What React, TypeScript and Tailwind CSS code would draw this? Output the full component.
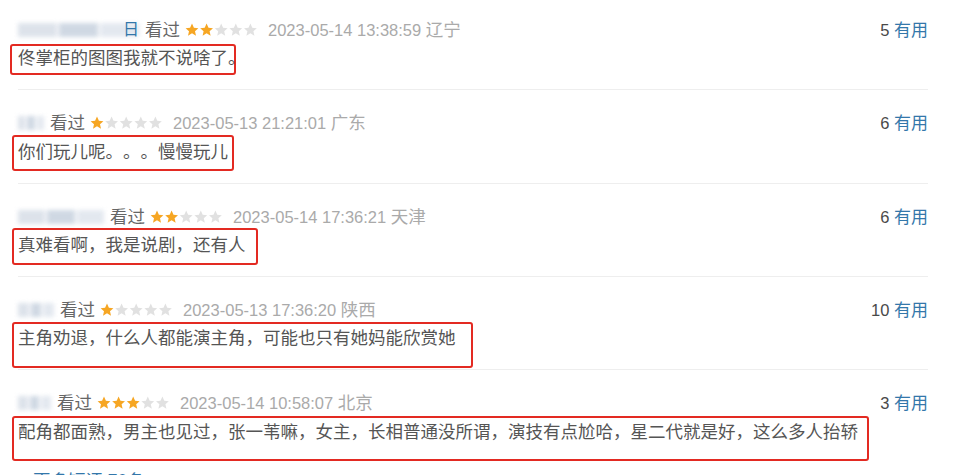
import React from 'react';

type Review = {
  nameW: number;
  nameTail?: string;
  stars: number;
  time: string;
  place: string;
  useful: number;
  text: string;
  headerMt: string;
  boxCls: string;
  dividerCls: string;
};

const reviews: Review[] = [
  {
    nameW: 121,
    nameTail: '日',
    stars: 2,
    time: '2023-05-14 13:38:59',
    place: '辽宁',
    useful: 5,
    text: '佟掌柜的图图我就不说啥了。',
    headerMt: 'mt-[20px]',
    boxCls: 'mt-[4px] -ml-[8px] w-[226px] h-[31px] pl-[6px] pt-[1px]',
    dividerCls: 'mt-[14px]',
  },
  {
    nameW: 26,
    stars: 1,
    time: '2023-05-13 21:21:01',
    place: '广东',
    useful: 6,
    text: '你们玩儿呢。。。慢慢玩儿',
    headerMt: 'mt-[23px]',
    boxCls: 'mt-[2px] -ml-[6px] w-[222px] h-[36px] pl-[4px] pt-[4px]',
    dividerCls: 'mt-[12px]',
  },
  {
    nameW: 86,
    stars: 2,
    time: '2023-05-14 17:36:21',
    place: '天津',
    useful: 6,
    text: '真难看啊，我是说剧，还有人',
    headerMt: 'mt-[23px]',
    boxCls: 'mt-[1px] -ml-[6px] w-[246px] h-[37px] pl-[4px] pt-[4px]',
    dividerCls: 'mt-[11px]',
  },
  {
    nameW: 36,
    stars: 1,
    time: '2023-05-13 17:36:20',
    place: '陕西',
    useful: 10,
    text: '主角劝退，什么人都能演主角，可能也只有她妈能欣赏她',
    headerMt: 'mt-[23px]',
    boxCls: 'mt-[2px] -ml-[6px] w-[461px] h-[46px] pl-[4px] pt-[3px]',
    dividerCls: 'mt-[1px]',
  },
  {
    nameW: 33,
    stars: 3,
    time: '2023-05-14 10:58:07',
    place: '北京',
    useful: 3,
    text: '配角都面熟，男主也见过，张一苇嘛，女主，长相普通没所谓，演技有点尬哈，星二代就是好，这么多人抬轿',
    headerMt: 'mt-[23px]',
    boxCls: 'mt-[3px] -ml-[6px] w-[857px] h-[45px] pl-[4px] pt-[3px]',
    dividerCls: 'hidden',
  },
];

function Stars({ n }: { n: number }) {
  const star = 'M7 0.6 L8.9 4.8 L13.4 5.2 L10 8.2 L11 12.7 L7 10.3 L3 12.7 L4 8.2 L0.6 5.2 L5.1 4.8 Z';
  return (
    <svg width="73" height="14" viewBox="0 0 73 14" className="shrink-0">
      {[0, 1, 2, 3, 4].map((i) => (
        <path key={i} d={star} transform={`translate(${i * 14.6} 0)`} fill={i < n ? '#f6a623' : '#e1e1e1'} />
      ))}
    </svg>
  );
}

function BlurName({ w, tail }: { w: number; tail?: string }) {
  return (
    <span className="relative inline-flex items-center h-[20px] shrink-0" style={{ width: w }}>
      <span className="absolute inset-y-[3px] left-0 right-0 flex gap-[2px] blur-[2px] opacity-80">
        <span className="flex-1 bg-[#d5dce6]" />
        <span className="flex-1 bg-[#c4cfdd]" />
        <span className="flex-1 bg-[#dde3ec]" />
      </span>
      {tail && <span className="absolute right-0 text-[#37a] text-[16px] leading-[20px]">{tail}</span>}
    </span>
  );
}

export default function App() {
  return (
    <div
      className="w-[960px] h-[475px] overflow-hidden bg-white [text-spacing-trim:space-all]"
      style={{ fontFamily: '"Liberation Sans", Arial, "Noto Sans CJK SC", sans-serif' }}
    >
      <div className="ml-[18px] w-[910px]">
        {reviews.map((r, idx) => (
          <div key={idx}>
            <div className={`${r.headerMt} flex items-center h-[20px] text-[16.5px] leading-[20px]`}>
              <BlurName w={r.nameW} tail={r.nameTail} />
              <span className="ml-[6px] text-[17.5px] text-[#666]">看过</span>
              <span className="ml-[5px]">
                <Stars n={r.stars} />
              </span>
              <span className="ml-[10px] text-[#aaa]">
                {r.time} <span className="text-[17.5px]">{r.place}</span>
              </span>
              <span className="ml-auto text-[#494949]">
                {r.useful} <span className="text-[17px] text-[#37a]">有用</span>
              </span>
            </div>
            <div className={`${r.boxCls} border-2 border-[#e32a22] rounded-[3px] text-[17.5px] leading-[22px] text-[#555] whitespace-nowrap`}>
              {r.text}
            </div>
            <div className={`${r.dividerCls} h-px bg-[#eee]`} />
          </div>
        ))}
        <div className="mt-[10px] ml-[15px] text-[17.5px] leading-[20px] text-[#37a] whitespace-nowrap">更多短评 70条</div>
      </div>
    </div>
  );
}
